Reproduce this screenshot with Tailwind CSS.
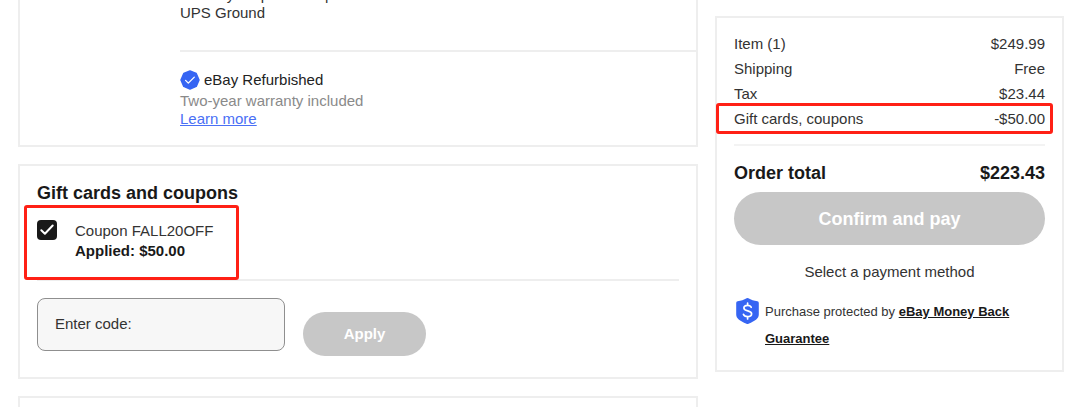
<!DOCTYPE html>
<html lang="en">
<head>
  <meta charset="UTF-8" />
  <title>Checkout</title>
  <meta name="viewport" content="width=device-width, initial-scale=1.0" />
  <script src="https://cdn.jsdelivr.net/npm/@tailwindcss/browser@4"></script>
</head>
<body class="h-screen overflow-hidden bg-white font-['Liberation_Sans',Arial,sans-serif] text-[15px] text-[#333]">
  <div class="flex items-start gap-[17px] pl-[18px] pr-4">

    <main class="-mt-4 flex min-w-0 flex-1 flex-col gap-[17px]">
      <!-- Delivery and item condition -->
      <section class="border-2 border-t-0 border-[#eee] pb-[17px] pl-40 leading-[18px]">
        <p class="mt-0.5">Delivery: Sep 27 – Sep 29</p>
        <p>UPS Ground</p>
        <hr class="mt-[28px] mb-[18px] border-t-2 border-[#eee]" />
        <div class="flex items-center gap-1 text-[#222]">
          <svg class="size-5" viewBox="0 0 20 20" aria-hidden="true">
            <path fill="#3665f3" stroke="#3665f3" stroke-width="1.5" stroke-linejoin="round" d="M10 1l6.2 2.5L19 10l-2.8 6.4L10 19l-6.2-2.6L1 10l2.8-6.5z" />
            <path fill="none" stroke="#fff" stroke-width="1.3" stroke-linecap="round" stroke-linejoin="round" d="M5.6 10.4l2.7 2.7 6-6" />
          </svg>
          <span>eBay Refurbished</span>
        </div>
        <p class="mt-0.5 text-[#8a8a8a]">Two-year warranty included</p>
        <a href="#" class="block text-[#4a70f5] underline">Learn more</a>
      </section>

      <!-- Coupons -->
      <section class="border-2 border-[#eee] px-[17px] pt-4 pb-[21px]">
        <h2 class="text-lg leading-[22px] font-bold text-[#191919]">Gift cards and coupons</h2>
        <div class="relative mt-4">
          <label class="flex items-start gap-[18px] leading-5">
            <span class="relative size-5 shrink-0">
              <input type="checkbox" checked class="block size-5 appearance-none rounded-[4px] bg-[#191919]" />
              <svg class="pointer-events-none absolute inset-0 size-5" viewBox="0 0 20 20" aria-hidden="true">
                <path fill="none" stroke="#fff" stroke-width="2" stroke-linecap="round" stroke-linejoin="round" d="M4.3 10.3l3.6 3.5 7.8-8.3" />
              </svg>
            </span>
            <span class="pt-px">Coupon FALL20OFF<br /><b class="text-[#191919]">Applied: $50.00</b></span>
          </label>
          <div class="pointer-events-none absolute -top-[15px] -left-[13px] h-[75px] w-[215px] rounded-[3px] border-3 border-[#ff2015]"></div>
        </div>
        <hr class="mt-[18px] border-t-2 border-[#eee]" />
        <form class="mt-[17px] flex items-start gap-[18px]">
          <label class="flex h-[53px] w-[248px] items-center gap-2 rounded-lg border border-[#8f8f8f] bg-[#f7f7f7] px-[17px]">
            <span class="shrink-0">Enter code:</span>
            <input type="text" class="min-w-0 flex-1 bg-transparent outline-none" />
          </label>
          <button type="button" class="mt-3.5 h-11 w-[123px] rounded-full bg-[#c7c7c7] font-bold text-white">Apply</button>
        </form>
      </section>

      <section class="h-20 border-2 border-[#eee]"></section>
    </main>

    <!-- Order summary -->
    <aside class="mt-4 w-[349px] shrink-0 border-2 border-[#eee] px-[17px] pt-[13px] pb-[18px]">
      <dl class="relative leading-[25px]">
        <div class="flex justify-between"><dt>Item (1)</dt><dd>$249.99</dd></div>
        <div class="flex justify-between"><dt>Shipping</dt><dd>Free</dd></div>
        <div class="flex justify-between"><dt>Tax</dt><dd>$23.44</dd></div>
        <div class="flex justify-between"><dt>Gift cards, coupons</dt><dd>-$50.00</dd></div>
        <div class="pointer-events-none absolute top-[72px] -right-2 -left-[18px] h-[31px] rounded-[3px] border-3 border-[#ff2015]"></div>
      </dl>
      <hr class="mt-[13px] border-t-2 border-[#f3f3f3]" />
      <div class="mt-4 flex justify-between text-lg leading-[22px] font-bold text-[#191919]">
        <span>Order total</span><span>$223.43</span>
      </div>
      <button type="button" class="mt-2 h-[53px] w-full rounded-full bg-[#c7c7c7] text-lg font-bold text-white">Confirm and pay</button>
      <p class="mt-[17px] text-center leading-5">Select a payment method</p>
      <div class="mt-4 flex items-start gap-1.5 pl-0.5">
        <svg class="h-[26px] w-[23px] shrink-0" viewBox="0 0 23 26" aria-hidden="true">
          <path fill="#3665f3" d="M10.6.3a2 2 0 0 1 1.8 0C15 1.9 18 2.9 21.4 3.3Q22.8 3.5 22.8 5v11.5c0 3.8-3.3 6.4-10.3 9.2a2.6 2.6 0 0 1-2 0C3.5 22.9.2 20.3.2 16.5V5Q.2 3.5 1.6 3.3C5 2.9 8 1.9 10.6.3z" />
          <path fill="none" stroke="#fff" stroke-width="1.7" stroke-linecap="round" d="M15.2 9.3C14.7 8 13.4 7.3 11.6 7.3c-2.2 0-3.7 1-3.7 2.7 0 3.9 7.7 2 7.7 5.8 0 1.8-1.6 2.9-4 2.9-2.2 0-3.7-.9-4.2-2.4M11.6 5.2v2.1M11.6 18.7v2.2" />
        </svg>
        <p class="text-[13px] leading-[27px]">Purchase protected by <a href="#" class="font-bold text-[#191919] underline">eBay Money Back Guarantee</a></p>
      </div>
    </aside>

  </div>
</body>
</html>
